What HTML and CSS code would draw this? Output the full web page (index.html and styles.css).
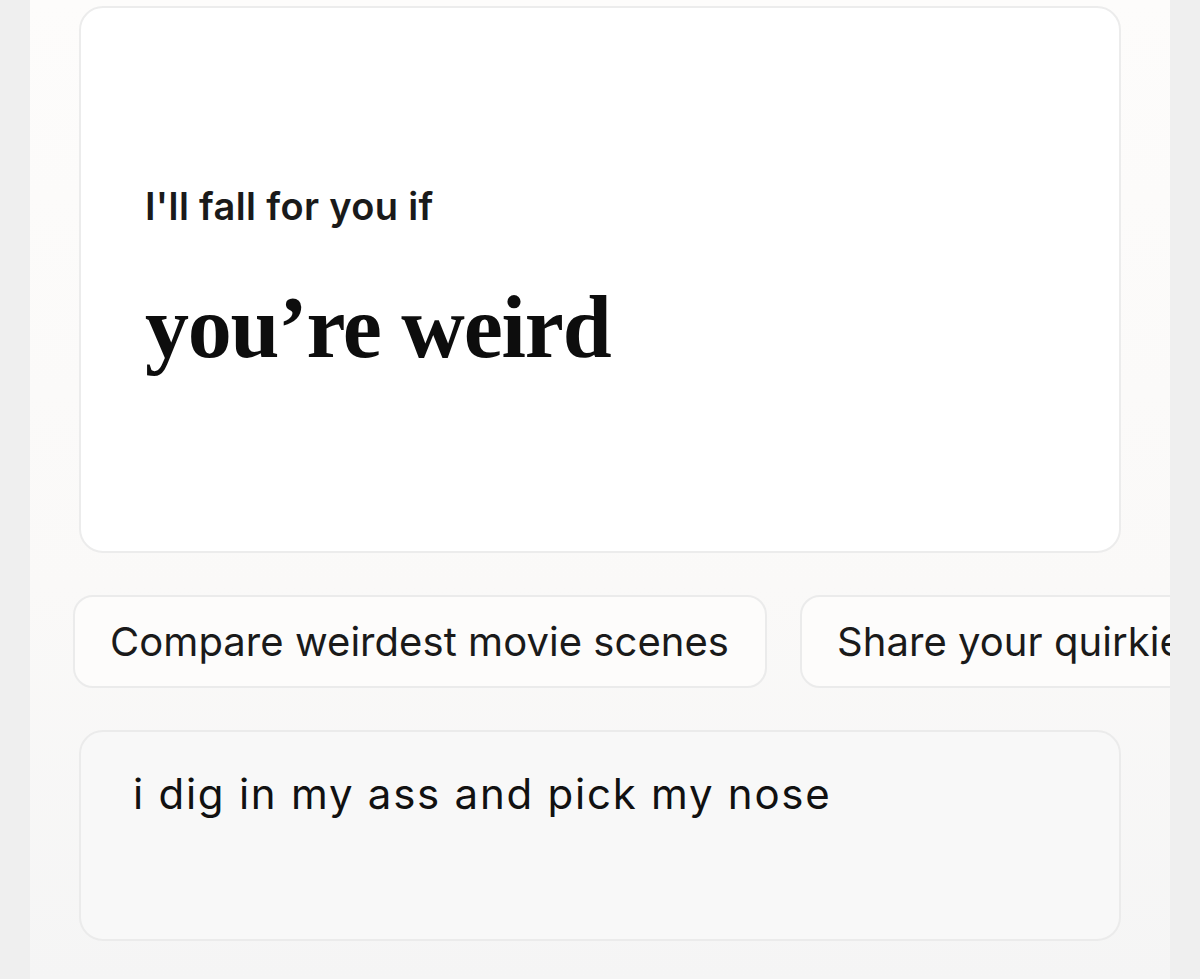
FILE: index.html
```html
<!DOCTYPE html>
<html lang="en">
<head>
<meta charset="utf-8">
<title>Prompt</title>
<link rel="stylesheet" href="styles.css">
</head>
<body>
<div class="page">
  <main class="column">
    <section class="prompt-card">
      <p class="prompt-label">I'll fall for you if</p>
      <h1 class="prompt-answer">you’re weird</h1>
    </section>
    <div class="chips">
      <button class="chip">Compare weirdest movie scenes</button>
      <button class="chip">Share your quirkiest habits</button>
    </div>
    <div class="reply-box">
      <p class="reply-text">i dig in my ass and pick my nose</p>
    </div>
  </main>
</div>
</body>
</html>
```
FILE: styles.css
```css
html, body {
  margin: 0;
  padding: 0;
  height: 100%;
}
body {
  background: #efefef;
  font-family: "Inter", "Noto Sans", sans-serif;
  color: #111;
}
.page {
  display: flex;
  justify-content: center;
  min-height: 979px;
}
.column {
  width: 1140px;
  min-height: 979px;
  background: linear-gradient(#fdfcfb 0%, #faf9f8 60%, #f5f5f5 100%);
  overflow: hidden;
  padding: 6px 49px 0 49px;
  box-sizing: border-box;
}
.prompt-card {
  background: #fff;
  border: 2px solid #ececec;
  border-radius: 24px;
  height: 547px;
  box-sizing: border-box;
  padding: 176px 0 0 64px;
}
.prompt-label {
  margin: 0;
  font-size: 38px;
  font-weight: 600;
  letter-spacing: 0.35px;
  line-height: 44px;
  color: #1a1a1a;
}
.prompt-answer {
  margin: 50px 0 0 0;
  font-family: "Liberation Serif", "DejaVu Serif", serif;
  font-weight: 700;
  font-size: 88px;
  letter-spacing: -1.2px;
  line-height: 100px;
  color: #0d0d0d;
}
.chips {
  display: flex;
  gap: 33px;
  margin: 42px 0 0 -6px;
  width: calc(100% + 100px);
}
.chip {
  flex: none;
  height: 93px;
  padding: 0 36px 0 35px;
  background: #fdfcfb;
  border: 2px solid #ebebeb;
  border-radius: 20px;
  font-family: "Inter", "Noto Sans", sans-serif;
  font-size: 40px;
  font-weight: 400;
  letter-spacing: 0.05px;
  color: #1a1a1a;
  white-space: nowrap;
}
.reply-box {
  margin-top: 42px;
  height: 211px;
  background: #f8f8f8;
  border: 2px solid #ebebeb;
  border-radius: 24px;
  box-sizing: border-box;
  padding: 36px 0 0 52px;
}
.reply-text {
  margin: 0;
  font-size: 42px;
  font-weight: 400;
  letter-spacing: 1.75px;
  line-height: 52px;
  color: #111;
}
```
